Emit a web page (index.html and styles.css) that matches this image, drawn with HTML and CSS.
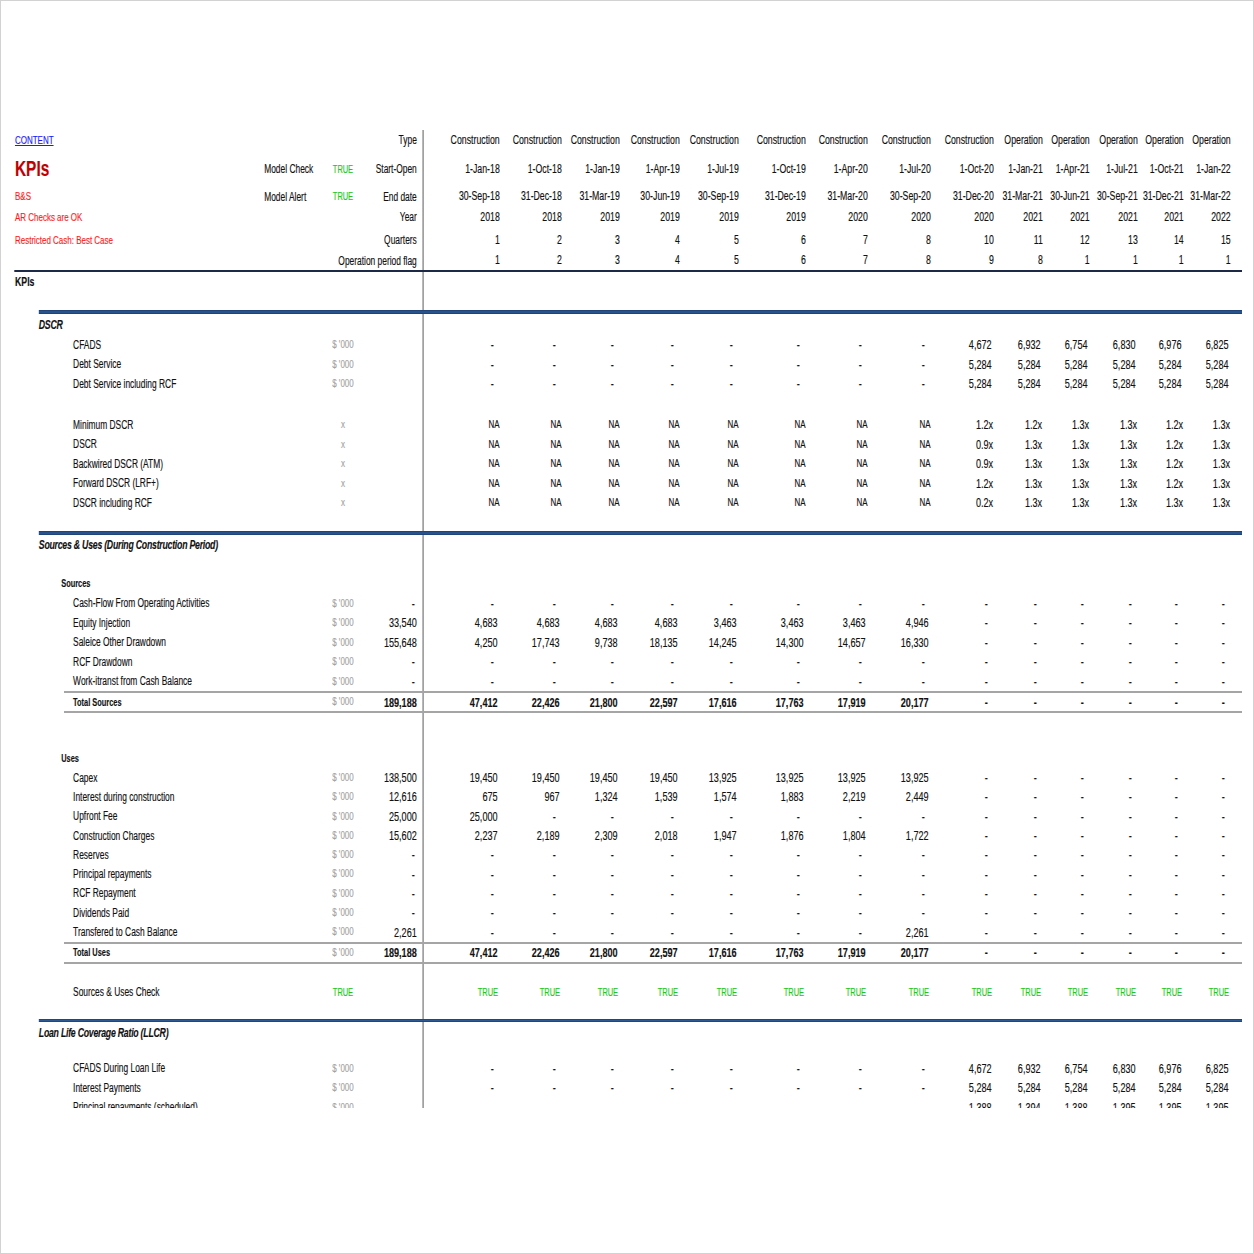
FILE: index.html
```html
<!DOCTYPE html>
<html lang="en">
<head>
<meta charset="utf-8">
<title>KPIs</title>
<link rel="stylesheet" href="styles.css">
</head>
<body>
<div class="frame">
<div class="sheet">

<div class="row hd r1">
<div class="l t0"><a class="link" href="#">CONTENT</a></div><span class="u"></span><span class="t">Type</span>
<span class="v">Construction</span><span class="v">Construction</span><span class="v">Construction</span><span class="v">Construction</span><span class="v">Construction</span><span class="v">Construction</span><span class="v">Construction</span><span class="v">Construction</span><span class="v">Construction</span><span class="v">Operation</span><span class="v">Operation</span><span class="v">Operation</span><span class="v">Operation</span><span class="v">Operation</span>
</div>

<div class="row hd r2">
<div class="l t0 split"><span class="title">KPIs</span><span class="mc">Model Check</span></div><span class="u ok">TRUE</span><span class="t">Start-Open</span>
<span class="v">1-Jan-18</span><span class="v">1-Oct-18</span><span class="v">1-Jan-19</span><span class="v">1-Apr-19</span><span class="v">1-Jul-19</span><span class="v">1-Oct-19</span><span class="v">1-Apr-20</span><span class="v">1-Jul-20</span><span class="v">1-Oct-20</span><span class="v">1-Jan-21</span><span class="v">1-Apr-21</span><span class="v">1-Jul-21</span><span class="v">1-Oct-21</span><span class="v">1-Jan-22</span>
</div>

<div class="row hd r3">
<div class="l t0 split"><span class="note">B&amp;S</span><span class="mc">Model Alert</span></div><span class="u ok">TRUE</span><span class="t">End date</span>
<span class="v">30-Sep-18</span><span class="v">31-Dec-18</span><span class="v">31-Mar-19</span><span class="v">30-Jun-19</span><span class="v">30-Sep-19</span><span class="v">31-Dec-19</span><span class="v">31-Mar-20</span><span class="v">30-Sep-20</span><span class="v">31-Dec-20</span><span class="v">31-Mar-21</span><span class="v">30-Jun-21</span><span class="v">30-Sep-21</span><span class="v">31-Dec-21</span><span class="v">31-Mar-22</span>
</div>

<div class="row hd r4">
<div class="l t0"><span class="note">AR Checks are OK</span></div><span class="u"></span><span class="t">Year</span>
<span class="v">2018</span><span class="v">2018</span><span class="v">2019</span><span class="v">2019</span><span class="v">2019</span><span class="v">2019</span><span class="v">2020</span><span class="v">2020</span><span class="v">2020</span><span class="v">2021</span><span class="v">2021</span><span class="v">2021</span><span class="v">2021</span><span class="v">2022</span>
</div>

<div class="row hd r5">
<div class="l t0"><span class="note">Restricted Cash: Best Case</span></div><span class="u"></span><span class="t">Quarters</span>
<span class="v">1</span><span class="v">2</span><span class="v">3</span><span class="v">4</span><span class="v">5</span><span class="v">6</span><span class="v">7</span><span class="v">8</span><span class="v">10</span><span class="v">11</span><span class="v">12</span><span class="v">13</span><span class="v">14</span><span class="v">15</span>
</div>

<div class="row hd r6">
<div class="l t0"></div><span class="ut">Operation period flag</span>
<span class="v">1</span><span class="v">2</span><span class="v">3</span><span class="v">4</span><span class="v">5</span><span class="v">6</span><span class="v">7</span><span class="v">8</span><span class="v">9</span><span class="v">8</span><span class="v">1</span><span class="v">1</span><span class="v">1</span><span class="v">1</span>
</div>

<div class="navy"></div>

<div class="row r20"><div class="l t0 kpis">KPIs</div></div>
<div class="gap g18"></div>
<div class="bar"></div>

<div class="row r20"><div class="l t1 sec">DSCR</div></div>

<div class="row">
<div class="l t3">CFADS</div><span class="u">$ '000</span><span class="t"></span>
<span class="v d">-</span><span class="v d">-</span><span class="v d">-</span><span class="v d">-</span><span class="v d">-</span><span class="v d">-</span><span class="v d">-</span><span class="v d">-</span><span class="v">4,672</span><span class="v">6,932</span><span class="v">6,754</span><span class="v">6,830</span><span class="v">6,976</span><span class="v">6,825</span>
</div>
<div class="row">
<div class="l t3">Debt Service</div><span class="u">$ '000</span><span class="t"></span>
<span class="v d">-</span><span class="v d">-</span><span class="v d">-</span><span class="v d">-</span><span class="v d">-</span><span class="v d">-</span><span class="v d">-</span><span class="v d">-</span><span class="v">5,284</span><span class="v">5,284</span><span class="v">5,284</span><span class="v">5,284</span><span class="v">5,284</span><span class="v">5,284</span>
</div>
<div class="row">
<div class="l t3">Debt Service including RCF</div><span class="u">$ '000</span><span class="t"></span>
<span class="v d">-</span><span class="v d">-</span><span class="v d">-</span><span class="v d">-</span><span class="v d">-</span><span class="v d">-</span><span class="v d">-</span><span class="v d">-</span><span class="v">5,284</span><span class="v">5,284</span><span class="v">5,284</span><span class="v">5,284</span><span class="v">5,284</span><span class="v">5,284</span>
</div>

<div class="gap g21"></div>

<div class="row">
<div class="l t3">Minimum DSCR</div><span class="u">x</span><span class="t"></span>
<span class="v na">NA</span><span class="v na">NA</span><span class="v na">NA</span><span class="v na">NA</span><span class="v na">NA</span><span class="v na">NA</span><span class="v na">NA</span><span class="v na">NA</span><span class="v r">1.2x</span><span class="v r">1.2x</span><span class="v r">1.3x</span><span class="v r">1.3x</span><span class="v r">1.2x</span><span class="v r">1.3x</span>
</div>
<div class="row">
<div class="l t3">DSCR</div><span class="u">x</span><span class="t"></span>
<span class="v na">NA</span><span class="v na">NA</span><span class="v na">NA</span><span class="v na">NA</span><span class="v na">NA</span><span class="v na">NA</span><span class="v na">NA</span><span class="v na">NA</span><span class="v r">0.9x</span><span class="v r">1.3x</span><span class="v r">1.3x</span><span class="v r">1.3x</span><span class="v r">1.2x</span><span class="v r">1.3x</span>
</div>
<div class="row">
<div class="l t3">Backwired DSCR (ATM)</div><span class="u">x</span><span class="t"></span>
<span class="v na">NA</span><span class="v na">NA</span><span class="v na">NA</span><span class="v na">NA</span><span class="v na">NA</span><span class="v na">NA</span><span class="v na">NA</span><span class="v na">NA</span><span class="v r">0.9x</span><span class="v r">1.3x</span><span class="v r">1.3x</span><span class="v r">1.3x</span><span class="v r">1.2x</span><span class="v r">1.3x</span>
</div>
<div class="row">
<div class="l t3">Forward DSCR (LRF+)</div><span class="u">x</span><span class="t"></span>
<span class="v na">NA</span><span class="v na">NA</span><span class="v na">NA</span><span class="v na">NA</span><span class="v na">NA</span><span class="v na">NA</span><span class="v na">NA</span><span class="v na">NA</span><span class="v r">1.2x</span><span class="v r">1.3x</span><span class="v r">1.3x</span><span class="v r">1.3x</span><span class="v r">1.2x</span><span class="v r">1.3x</span>
</div>
<div class="row">
<div class="l t3">DSCR including RCF</div><span class="u">x</span><span class="t"></span>
<span class="v na">NA</span><span class="v na">NA</span><span class="v na">NA</span><span class="v na">NA</span><span class="v na">NA</span><span class="v na">NA</span><span class="v na">NA</span><span class="v na">NA</span><span class="v r">0.2x</span><span class="v r">1.3x</span><span class="v r">1.3x</span><span class="v r">1.3x</span><span class="v r">1.3x</span><span class="v r">1.3x</span>
</div>

<div class="gap g18"></div>
<div class="bar"></div>

<div class="row"><div class="l t1 sec">Sources &amp; Uses (During Construction Period)</div></div>
<div class="gap g19"></div>
<div class="row"><div class="l t2 sub">Sources</div></div>

<div class="row">
<div class="l t3">Cash-Flow From Operating Activities</div><span class="u">$ '000</span><span class="t d">-</span>
<span class="v d">-</span><span class="v d">-</span><span class="v d">-</span><span class="v d">-</span><span class="v d">-</span><span class="v d">-</span><span class="v d">-</span><span class="v d">-</span><span class="v d">-</span><span class="v d">-</span><span class="v d">-</span><span class="v d">-</span><span class="v d">-</span><span class="v d">-</span>
</div>
<div class="row">
<div class="l t3">Equity Injection</div><span class="u">$ '000</span><span class="t">33,540</span>
<span class="v">4,683</span><span class="v">4,683</span><span class="v">4,683</span><span class="v">4,683</span><span class="v">3,463</span><span class="v">3,463</span><span class="v">3,463</span><span class="v">4,946</span><span class="v d">-</span><span class="v d">-</span><span class="v d">-</span><span class="v d">-</span><span class="v d">-</span><span class="v d">-</span>
</div>
<div class="row">
<div class="l t3">Saleice Other Drawdown</div><span class="u">$ '000</span><span class="t">155,648</span>
<span class="v">4,250</span><span class="v">17,743</span><span class="v">9,738</span><span class="v">18,135</span><span class="v">14,245</span><span class="v">14,300</span><span class="v">14,657</span><span class="v">16,330</span><span class="v d">-</span><span class="v d">-</span><span class="v d">-</span><span class="v d">-</span><span class="v d">-</span><span class="v d">-</span>
</div>
<div class="row">
<div class="l t3">RCF Drawdown</div><span class="u">$ '000</span><span class="t d">-</span>
<span class="v d">-</span><span class="v d">-</span><span class="v d">-</span><span class="v d">-</span><span class="v d">-</span><span class="v d">-</span><span class="v d">-</span><span class="v d">-</span><span class="v d">-</span><span class="v d">-</span><span class="v d">-</span><span class="v d">-</span><span class="v d">-</span><span class="v d">-</span>
</div>
<div class="row">
<div class="l t3">Work-itranst from Cash Balance</div><span class="u">$ '000</span><span class="t d">-</span>
<span class="v d">-</span><span class="v d">-</span><span class="v d">-</span><span class="v d">-</span><span class="v d">-</span><span class="v d">-</span><span class="v d">-</span><span class="v d">-</span><span class="v d">-</span><span class="v d">-</span><span class="v d">-</span><span class="v d">-</span><span class="v d">-</span><span class="v d">-</span>
</div>
<div class="row tot">
<div class="l2">Total Sources</div><span class="u">$ '000</span><span class="t">189,188</span>
<span class="v">47,412</span><span class="v">22,426</span><span class="v">21,800</span><span class="v">22,597</span><span class="v">17,616</span><span class="v">17,763</span><span class="v">17,919</span><span class="v">20,177</span><span class="v d">-</span><span class="v d">-</span><span class="v d">-</span><span class="v d">-</span><span class="v d">-</span><span class="v d">-</span>
</div>

<div class="gap g35"></div>
<div class="row"><div class="l t2 sub">Uses</div></div>

<div class="row ru">
<div class="l t3">Capex</div><span class="u">$ '000</span><span class="t">138,500</span>
<span class="v">19,450</span><span class="v">19,450</span><span class="v">19,450</span><span class="v">19,450</span><span class="v">13,925</span><span class="v">13,925</span><span class="v">13,925</span><span class="v">13,925</span><span class="v d">-</span><span class="v d">-</span><span class="v d">-</span><span class="v d">-</span><span class="v d">-</span><span class="v d">-</span>
</div>
<div class="row ru">
<div class="l t3">Interest during construction</div><span class="u">$ '000</span><span class="t">12,616</span>
<span class="v">675</span><span class="v">967</span><span class="v">1,324</span><span class="v">1,539</span><span class="v">1,574</span><span class="v">1,883</span><span class="v">2,219</span><span class="v">2,449</span><span class="v d">-</span><span class="v d">-</span><span class="v d">-</span><span class="v d">-</span><span class="v d">-</span><span class="v d">-</span>
</div>
<div class="row ru">
<div class="l t3">Upfront Fee</div><span class="u">$ '000</span><span class="t">25,000</span>
<span class="v">25,000</span><span class="v d">-</span><span class="v d">-</span><span class="v d">-</span><span class="v d">-</span><span class="v d">-</span><span class="v d">-</span><span class="v d">-</span><span class="v d">-</span><span class="v d">-</span><span class="v d">-</span><span class="v d">-</span><span class="v d">-</span><span class="v d">-</span>
</div>
<div class="row ru">
<div class="l t3">Construction Charges</div><span class="u">$ '000</span><span class="t">15,602</span>
<span class="v">2,237</span><span class="v">2,189</span><span class="v">2,309</span><span class="v">2,018</span><span class="v">1,947</span><span class="v">1,876</span><span class="v">1,804</span><span class="v">1,722</span><span class="v d">-</span><span class="v d">-</span><span class="v d">-</span><span class="v d">-</span><span class="v d">-</span><span class="v d">-</span>
</div>
<div class="row ru">
<div class="l t3">Reserves</div><span class="u">$ '000</span><span class="t d">-</span>
<span class="v d">-</span><span class="v d">-</span><span class="v d">-</span><span class="v d">-</span><span class="v d">-</span><span class="v d">-</span><span class="v d">-</span><span class="v d">-</span><span class="v d">-</span><span class="v d">-</span><span class="v d">-</span><span class="v d">-</span><span class="v d">-</span><span class="v d">-</span>
</div>
<div class="row ru">
<div class="l t3">Principal repayments</div><span class="u">$ '000</span><span class="t d">-</span>
<span class="v d">-</span><span class="v d">-</span><span class="v d">-</span><span class="v d">-</span><span class="v d">-</span><span class="v d">-</span><span class="v d">-</span><span class="v d">-</span><span class="v d">-</span><span class="v d">-</span><span class="v d">-</span><span class="v d">-</span><span class="v d">-</span><span class="v d">-</span>
</div>
<div class="row ru">
<div class="l t3">RCF Repayment</div><span class="u">$ '000</span><span class="t d">-</span>
<span class="v d">-</span><span class="v d">-</span><span class="v d">-</span><span class="v d">-</span><span class="v d">-</span><span class="v d">-</span><span class="v d">-</span><span class="v d">-</span><span class="v d">-</span><span class="v d">-</span><span class="v d">-</span><span class="v d">-</span><span class="v d">-</span><span class="v d">-</span>
</div>
<div class="row ru">
<div class="l t3">Dividends Paid</div><span class="u">$ '000</span><span class="t d">-</span>
<span class="v d">-</span><span class="v d">-</span><span class="v d">-</span><span class="v d">-</span><span class="v d">-</span><span class="v d">-</span><span class="v d">-</span><span class="v d">-</span><span class="v d">-</span><span class="v d">-</span><span class="v d">-</span><span class="v d">-</span><span class="v d">-</span><span class="v d">-</span>
</div>
<div class="row ru">
<div class="l t3">Transfered to Cash Balance</div><span class="u">$ '000</span><span class="t">2,261</span>
<span class="v d">-</span><span class="v d">-</span><span class="v d">-</span><span class="v d">-</span><span class="v d">-</span><span class="v d">-</span><span class="v d">-</span><span class="v">2,261</span><span class="v d">-</span><span class="v d">-</span><span class="v d">-</span><span class="v d">-</span><span class="v d">-</span><span class="v d">-</span>
</div>
<div class="row tot">
<div class="l2">Total Uses</div><span class="u">$ '000</span><span class="t">189,188</span>
<span class="v">47,412</span><span class="v">22,426</span><span class="v">21,800</span><span class="v">22,597</span><span class="v">17,616</span><span class="v">17,763</span><span class="v">17,919</span><span class="v">20,177</span><span class="v d">-</span><span class="v d">-</span><span class="v d">-</span><span class="v d">-</span><span class="v d">-</span><span class="v d">-</span>
</div>

<div class="gap g19"></div>
<div class="row">
<div class="l t3">Sources &amp; Uses Check</div><span class="u ok">TRUE</span><span class="t"></span>
<span class="v ok">TRUE</span><span class="v ok">TRUE</span><span class="v ok">TRUE</span><span class="v ok">TRUE</span><span class="v ok">TRUE</span><span class="v ok">TRUE</span><span class="v ok">TRUE</span><span class="v ok">TRUE</span><span class="v ok">TRUE</span><span class="v ok">TRUE</span><span class="v ok">TRUE</span><span class="v ok">TRUE</span><span class="v ok">TRUE</span><span class="v ok">TRUE</span>
</div>

<div class="gap g17"></div>
<div class="bar thin"></div>

<div class="row r20"><div class="l t1 sec">Loan Life Coverage Ratio (LLCR)</div></div>
<div class="gap g15"></div>

<div class="row">
<div class="l t3">CFADS During Loan Life</div><span class="u">$ '000</span><span class="t"></span>
<span class="v d">-</span><span class="v d">-</span><span class="v d">-</span><span class="v d">-</span><span class="v d">-</span><span class="v d">-</span><span class="v d">-</span><span class="v d">-</span><span class="v">4,672</span><span class="v">6,932</span><span class="v">6,754</span><span class="v">6,830</span><span class="v">6,976</span><span class="v">6,825</span>
</div>
<div class="row">
<div class="l t3">Interest Payments</div><span class="u">$ '000</span><span class="t"></span>
<span class="v d">-</span><span class="v d">-</span><span class="v d">-</span><span class="v d">-</span><span class="v d">-</span><span class="v d">-</span><span class="v d">-</span><span class="v d">-</span><span class="v">5,284</span><span class="v">5,284</span><span class="v">5,284</span><span class="v">5,284</span><span class="v">5,284</span><span class="v">5,284</span>
</div>
<div class="row">
<div class="l t3">Principal repayments (scheduled)</div><span class="u">$ '000</span><span class="t"></span>
<span class="v d">-</span><span class="v d">-</span><span class="v d">-</span><span class="v d">-</span><span class="v d">-</span><span class="v d">-</span><span class="v d">-</span><span class="v d">-</span><span class="v">1,388</span><span class="v">1,394</span><span class="v">1,388</span><span class="v">1,395</span><span class="v">1,395</span><span class="v">1,395</span>
</div>

</div>
</div>
</body>
</html>
```

FILE: styles.css
```css
html, body {
  margin: 0;
  padding: 0;
  background: #ffffff;
}

.frame {
  width: 1254px;
  height: 1254px;
  box-sizing: border-box;
  border: 1px solid #d2d2d2;
  overflow: hidden;
  background: #ffffff;
}

/* the sheet is laid out at natural width and compressed horizontally,
   as in the narrow spreadsheet capture */
.sheet {
  width: 1773px;
  height: 978px;
  margin-top: 129px;
  overflow: hidden;
  transform: scaleX(0.7);
  transform-origin: 0 0;
  font-family: "Liberation Sans", Arial, sans-serif;
  color: #111111;
  -webkit-text-stroke: 0.15px currentColor;
  background: linear-gradient(#8a8a8a, #8a8a8a) 602px 0 / 2px 100% no-repeat;
}

.row {
  display: grid;
  grid-template-columns: 90px 370px 57px 87px 111.4px 88.6px 82.9px 85.7px 84.3px 95.7px 88.6px 90px 90px 70px 67.1px 68.6px 65.7px 67.1px 11.4px;
  align-items: center;
  height: 19.5px;
  line-height: 1;
}

.row > * {
  white-space: nowrap;
}

.ru { height: 19.3px; }
.r20 { height: 20px; }

.r1 { height: 20px; }
.r2 { height: 38px; }
.r3 { height: 17px; }
.r4 { height: 24px; }
.r5 { height: 22px; }
.r6 { height: 19px; }

.l {
  grid-column: 1 / 3;
  font-size: 12px;
}

.t0 { padding-left: 20px; }
.t1 { padding-left: 54px; }
.t2 { padding-left: 86px; }
.t3 { padding-left: 103px; }

.split {
  display: flex;
  align-items: center;
}

.split > :first-child {
  flex: 1;
}

.mc {
  width: 84px;
  font-size: 12px;
}

.link {
  color: #1a1aff;
  text-decoration: underline;
  font-size: 11.4px;
}

.title {
  color: #c00000;
  font-weight: bold;
  font-size: 22px;
}

.note {
  color: #ff1a1a;
  font-size: 11.4px;
}

.kpis {
  font-weight: bold;
  font-size: 12.5px;
}

.sec {
  font-weight: bold;
  font-style: italic;
  font-size: 12.5px;
  letter-spacing: -0.35px;
}

.sub {
  font-weight: bold;
  font-size: 10.6px;
}

.u {
  text-align: center;
  color: #a3a3a3;
  font-size: 11.4px;
}

.t {
  text-align: right;
  padding-right: 10px;
  font-size: 13px;
}

.t.d { padding-right: 13px; }

.ut {
  grid-column: 3 / 5;
  text-align: right;
  padding-right: 10px;
  font-size: 12px;
}

.v {
  text-align: right;
  padding-right: 6px;
  font-size: 13px;
}

.v.d { padding-right: 11.4px; }
.v.na { padding-right: 3.3px; font-size: 11.4px; }
.v.r { padding-right: 3.8px; }

.ok {
  color: #19c819;
  font-size: 10.6px;
}

.v.ok { padding-right: 5.4px; }

.hd .t { font-size: 12px; }
.hd .v {
  padding-right: 2.9px;
  font-size: 12.5px;
}

.navy {
  height: 2px;
  margin-left: 18.6px;
  background: #1c2947;
}

.bar {
  height: 4px;
  margin: 0 0 1px 54.3px;
  background: linear-gradient(#1d3c6e, #2b5a97 50%, #1d3c6e);
}

.bar.thin { height: 3px; }

.gap { height: 18px; }
.g15 { height: 15px; }
.g17 { height: 17.3px; }
.g18 { height: 18px; }
.g19 { height: 19px; }
.g21 { height: 21.5px; }
.g35 { height: 35.5px; }

.tot {
  height: 22px;
  background:
    linear-gradient(#a5a5a5, #a5a5a5) 90px 0 / calc(100% - 90px) 2px no-repeat,
    linear-gradient(#a5a5a5, #a5a5a5) 90px 100% / calc(100% - 90px) 2px no-repeat;
}

.tot .l2 {
  grid-column: 2;
  padding-left: 13px;
  font-weight: bold;
  font-size: 10.6px;
}

.tot .v,
.tot .t {
  font-weight: bold;
}
```
